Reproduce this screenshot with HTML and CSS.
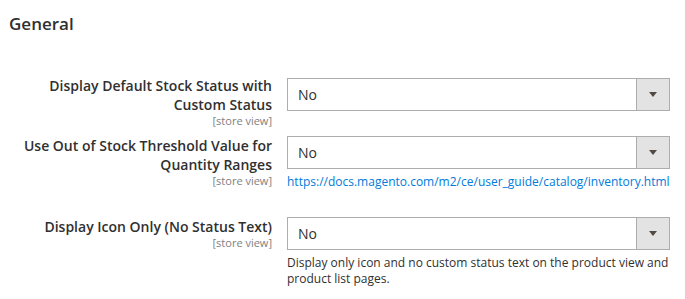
FILE: index.html
```html
<!DOCTYPE html>
<html lang="en">
<head>
    <meta charset="UTF-8">
    <meta name="viewport" content="width=device-width, initial-scale=1.0">
    <title>Stock Status Settings</title>
    <link rel="stylesheet" href="styles.css">
</head>
<body>
    <div class="section">
        <h2 class="section-title">General</h2>

        <!-- Settings rows -->
        <div class="fieldset">
            <div class="row row-first">
                <div class="label">
                    <span>Display Default Stock Status with Custom Status</span>
                    <span class="scope">[store view]</span>
                </div>
                <div class="control">
                    <div class="select">
                        <span class="select-value">No</span>
                        <span class="select-arrow"></span>
                    </div>
                </div>
            </div>

            <div class="row row-spaced">
                <div class="label">
                    <span>Use Out of Stock Threshold Value for Quantity Ranges</span>
                    <span class="scope">[store view]</span>
                </div>
                <div class="control">
                    <div class="select">
                        <span class="select-value">No</span>
                        <span class="select-arrow"></span>
                    </div>
                    <p class="note"><a href="https://docs.magento.com/m2/ce/user_guide/catalog/inventory.html">https://docs.magento.com/m2/ce/user_guide/catalog/inventory.html</a></p>
                </div>
            </div>

            <div class="row">
                <div class="label">
                    <span>Display Icon Only (No Status Text)</span>
                    <span class="scope">[store view]</span>
                </div>
                <div class="control">
                    <div class="select">
                        <span class="select-value">No</span>
                        <span class="select-arrow"></span>
                    </div>
                    <p class="note">Display only icon and no custom status text on the product view and product list pages.</p>
                </div>
            </div>
        </div>
    </div>
</body>
</html>
```

FILE: styles.css
```css
* {
    margin: 0;
    padding: 0;
    box-sizing: border-box;
}

body {
    font-family: "Open Sans", Arial, sans-serif;
    background-color: #ffffff;
    color: #303030;
}

.section {
    width: 685px;
}

.section-title {
    font-size: 17px;
    font-weight: 600;
    line-height: 23px;
    color: #303030;
    padding: 12px 0 0 9px;
}

/* Rows */
.fieldset {
    padding-top: 43px;
}

.row {
    display: flex;
    gap: 15px;
    margin-bottom: 5px;
}

.row-first {
    margin-bottom: 9px;
}

.row-spaced {
    margin-bottom: 27px;
}

.label {
    width: 272px;
    padding-left: 9px;
    text-align: right;
    font-size: 14px;
    font-weight: 600;
    line-height: 19px;
    color: #303030;
}

.row-first .label {
    margin-top: -2px;
}

.label span {
    display: block;
}

.label .scope {
    font-size: 11px;
    font-weight: 400;
    line-height: 13px;
    color: #808080;
}

.control {
    width: 383px;
}

/* Select box */
.select {
    display: flex;
    align-items: center;
    height: 33px;
    border: 1px solid #adadad;
    background-color: #ffffff;
}

.select-value {
    flex: 1;
    padding-left: 10px;
    font-size: 14px;
    color: #303030;
}

.select-arrow {
    width: 33px;
    height: 100%;
    background-color: #e3e3e3;
    border-left: 1px solid #adadad;
    display: flex;
    align-items: center;
    justify-content: center;
}

.select-arrow::after {
    content: "";
    border-left: 4px solid transparent;
    border-right: 4px solid transparent;
    border-top: 5px solid #514943;
}

.note {
    margin-top: 5px;
    font-size: 12px;
    line-height: 16px;
    color: #303030;
}

.note a {
    color: #007bdb;
    text-decoration: none;
}
```
